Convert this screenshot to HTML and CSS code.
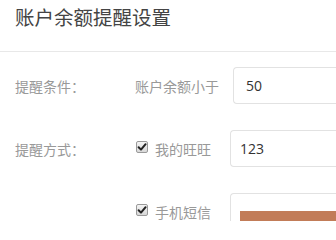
FILE: index.html
```html
<!DOCTYPE html>
<html lang="zh-CN">
<head>
<meta charset="utf-8">
<link rel="stylesheet" href="styles.css">
</head>
<body>
<div class="header">账户余额提醒设置</div>
<div class="form">
  <div class="row">
    <div class="label">提醒条件：</div>
    <div class="text first">账户余额小于</div>
    <div class="input pad-wide">50</div>
  </div>
  <div class="row">
    <div class="label">提醒方式：</div>
    <span class="check"><svg viewBox="0 0 12 12" width="12" height="12"><path d="M2.6 6.2 L5 8.6 L9.6 3.2" fill="none" stroke="#222" stroke-width="2" stroke-linecap="round" stroke-linejoin="round"/></svg></span>
    <div class="text opt">我的旺旺</div>
    <div class="input">123</div>
  </div>
  <div class="row">
    <div class="label"></div>
    <span class="check"><svg viewBox="0 0 12 12" width="12" height="12"><path d="M2.6 6.2 L5 8.6 L9.6 3.2" fill="none" stroke="#222" stroke-width="2" stroke-linecap="round" stroke-linejoin="round"/></svg></span>
    <div class="text opt">手机短信</div>
    <div class="input"><span class="mask"></span></div>
  </div>
</div>
</body>
</html>
```
FILE: styles.css
```css
html, body {
  margin: 0;
  padding: 0;
  background: #fff;
  overflow: hidden;
}
body {
  font-family: "Noto Sans CJK SC", "Noto Sans", sans-serif;
  width: 336px;
  height: 221px;
}
.header {
  height: 52px;
  line-height: 33px;
  padding-left: 15px;
  font-size: 19.5px;
  color: #444;
  border-bottom: 1px solid #e8e8e8;
  box-sizing: border-box;
  white-space: nowrap;
}
.form {
  padding-top: 15px;
  display: flex;
  flex-direction: column;
  gap: 26px;
}
.row {
  display: flex;
  align-items: center;
  height: 37px;
  white-space: nowrap;
}
.label {
  width: 135px;
  flex: none;
  padding-left: 15px;
  box-sizing: border-box;
  font-size: 14px;
  color: #999;
}
.text {
  font-size: 14px;
  color: #999;
}
.text.first {
  width: 98px;
  flex: none;
}
.check {
  flex: none;
  width: 12px;
  height: 12px;
  margin-left: 1px;
  border: 1px solid #9a9a9a;
  border-radius: 2px;
  box-sizing: border-box;
  background: linear-gradient(#f4f4f4, #d8d8d8);
  display: flex;
  align-items: center;
  justify-content: center;
  margin-top: -3px;
}
.check svg {
  display: block;
  flex: none;
}
.text.opt {
  margin-left: 7px;
  width: 75px;
  flex: none;
}
.input {
  flex: 1;
  min-width: 0;
  height: 37px;
  box-sizing: border-box;
  border: 1px solid #e2e2e2;
  border-right: none;
  border-radius: 4px 0 0 4px;
  padding-left: 9px;
  display: flex;
  align-items: center;
  overflow: hidden;
  font-family: "Open Sans", "Noto Sans", sans-serif;
  font-size: 14px;
  color: #333;
}
.input.pad-wide {
  padding-left: 12px;
}
.mask {
  display: block;
  flex: 1;
  height: 10px;
  background: #c27c58;
  margin-top: 9px;
}
```
